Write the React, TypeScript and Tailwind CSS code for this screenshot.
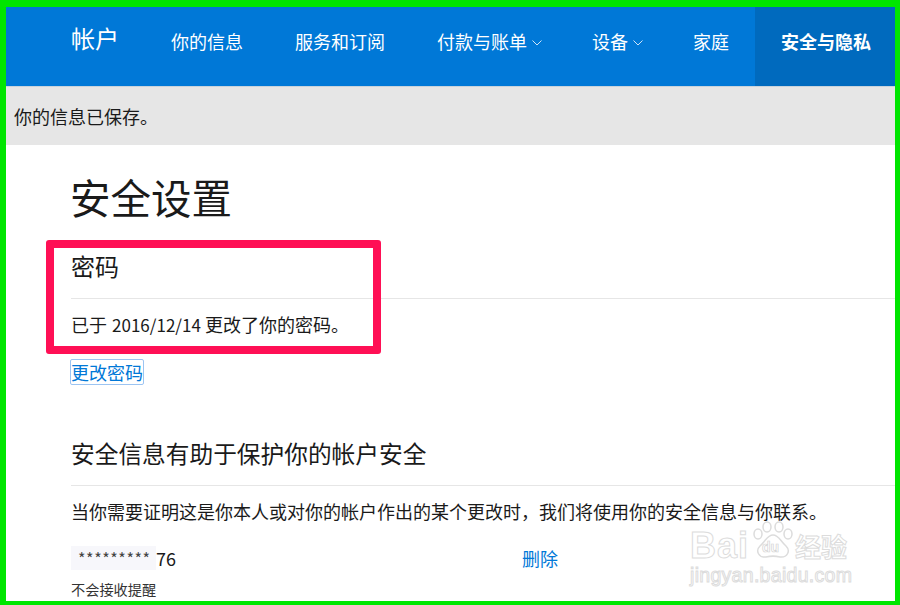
import React from "react";

const font = { fontFamily: '"Noto Sans CJK SC", "Noto Sans", sans-serif' };

function Chevron() {
  return (
    <svg width="10" height="6" viewBox="0 0 10 6" className="ml-[5px] mt-[3px]" fill="none" stroke="#cfe4f7" strokeWidth="1">
      <path d="M0.5 0.5 L5 5 L9.5 0.5" />
    </svg>
  );
}

function Paw() {
  return (
    <svg width="42" height="38" viewBox="0 0 42 38" fill="none" stroke="#dcdcdc" strokeWidth="1.5">
      <ellipse cx="6" cy="13" rx="4" ry="5" />
      <ellipse cx="15" cy="6" rx="4" ry="5" />
      <ellipse cx="27" cy="6" rx="4" ry="5" />
      <ellipse cx="36" cy="13" rx="4" ry="5" />
      <path d="M21 14 C15 14 14 20 8 25 C3 30 7 37 14 36 C18 35 24 35 28 36 C35 37 39 30 34 25 C28 20 27 14 21 14 Z" />
    </svg>
  );
}

export default function App() {
  return (
    <div className="relative w-[900px] h-[605px] overflow-hidden bg-white border-solid border-[#00e600] border-t-[7px] border-l-[6px] border-r-[5px] border-b-[4px] text-[#1a1a1a]" style={font}>
      <header className="flex h-[79px] bg-[#0078d7] text-white text-[18px] leading-[26px]">
        <div className="ml-[65px] mt-[16px] w-[100px] text-[24px] leading-[30px]">帐户</div>
        <nav className="flex flex-1 pt-[21px]">
          <a className="w-[124px]">你的信息</a>
          <a className="w-[142px]">服务和订阅</a>
          <a className="flex items-center w-[155px] h-[26px]">付款与账单<Chevron /></a>
          <a className="flex items-center w-[101px] h-[26px]">设备<Chevron /></a>
          <a className="w-[62px]">家庭</a>
        </nav>
        <a className="w-[140px] shrink-0 bg-[#006abe] pt-[21px] pl-[26px] font-bold">安全与隐私</a>
      </header>
      <div className="h-[59px] border-t border-[#c9d3dc] bg-[#e6e6e6] pl-[8px] pt-[16px] text-[18px] leading-[26px]">你的信息已保存。</div>
      <main className="pl-[65px]">
        <h1 className="mt-[24px] -ml-[1px] text-[40.5px] leading-[56px] font-normal">安全设置</h1>
        <h2 className="mt-[23px] h-[51px] border-b border-[#e6e6e6] text-[24px] leading-[36px] font-normal">密码</h2>
        <p className="mt-[12px] text-[18px] leading-[26px]">已于 <span className="ml-[1px] text-[17px]">2016/12/14</span> 更改了你的密码。</p>
        <a className="mt-[22px] block w-fit text-[18px] leading-[24px] text-[#0078d7] outline outline-1 outline-[#9cc4f2] rounded-[1px]">更改密码</a>
        <h2 className="mt-[51px] h-[51px] border-b border-[#e6e6e6] text-[23.7px] leading-[36px] font-normal">安全信息有助于保护你的帐户安全</h2>
        <p className="mt-[12px] text-[18px] leading-[26px] whitespace-nowrap">当你需要证明这是你本人或对你的帐户作出的某个更改时，我们将使用你的安全信息与你联系。</p>
        <div className="mt-[22px] flex h-[24px] items-center text-[18px]">
          <span className="flex h-[24px] w-[85px] items-center bg-[#f7f7fb] pl-[7px] text-[16px] tracking-[0.6px] text-[#444]">*********</span>
          <span className="w-[366px] leading-[24px]">76</span>
          <a className="text-[#0078d7] leading-[24px]">删除</a>
        </div>
        <p className="mt-[9px] text-[14.2px] leading-[20px] text-[#333]">不会接收提醒</p>
      </main>

      <div className="absolute left-[40px] top-[233px] h-[114px] w-[335px] rounded-[3px] border-[8px] border-[#ff0f55]" />

      <div className="absolute left-[684px] top-[520px] flex items-center text-white" style={{ WebkitTextStroke: "1px #dcdcdc" }}>
        <span className="w-[64px] text-[36px] leading-[38px] font-bold tracking-[1px]" style={{ fontFamily: '"Liberation Sans", sans-serif' }}>Bai</span>
        <span className="ml-[41px] text-[26px] font-bold leading-[32px]">经验</span>
      </div>
      <div className="absolute left-[684px] top-[556px] text-[19.5px] leading-[24px] text-white tracking-[0.3px]" style={{ WebkitTextStroke: "1px #dcdcdc", fontFamily: '"Liberation Sans", sans-serif' }}>jingyan.baidu.com</div>
      <div className="absolute left-[746px] top-[514px]">
        <Paw />
      </div>
      <div className="absolute left-[756px] top-[531px] text-[14px] leading-[18px] font-bold text-white" style={{ WebkitTextStroke: "0.7px #d4d4d4", fontFamily: '"Liberation Sans", sans-serif' }}>du</div>
    </div>
  );
}
